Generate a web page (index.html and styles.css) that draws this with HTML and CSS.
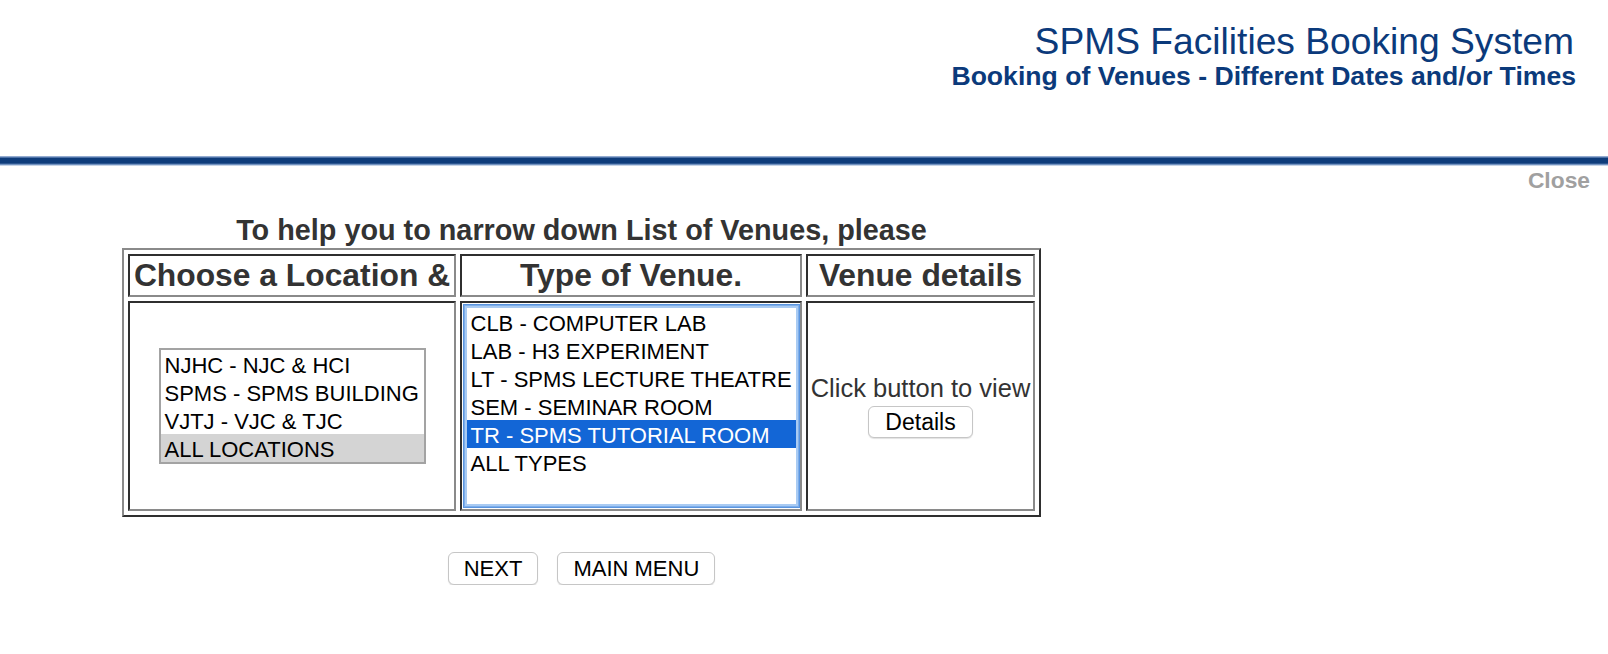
FILE: index.html
```html
<!DOCTYPE html>
<html lang="en">
<head>
<meta charset="utf-8">
<title>SPMS Facilities Booking System</title>
<link rel="stylesheet" href="styles.css">
</head>
<body>
<header class="masthead">
  <div class="title">SPMS Facilities Booking System</div>
  <div class="subtitle">Booking of Venues - Different Dates and/or Times</div>
</header>
<div class="rule"></div>
<div class="close-row"><a class="close">Close</a></div>
<main class="content">
  <div class="prompt">To help you to narrow down List of Venues, please</div>
  <div class="picker">
    <div class="cell head">Choose a Location &amp;</div>
    <div class="cell head">Type of Venue.</div>
    <div class="cell head">Venue details</div>
    <div class="cell body">
      <div class="listbox loc" role="listbox">
        <div class="opt">NJHC - NJC &amp; HCI</div>
        <div class="opt">SPMS - SPMS BUILDING</div>
        <div class="opt">VJTJ - VJC &amp; TJC</div>
        <div class="opt sel-inactive">ALL LOCATIONS</div>
      </div>
    </div>
    <div class="cell body">
      <div class="listbox type" role="listbox">
        <div class="opt">CLB - COMPUTER LAB</div>
        <div class="opt">LAB - H3 EXPERIMENT</div>
        <div class="opt">LT - SPMS LECTURE THEATRE</div>
        <div class="opt">SEM - SEMINAR ROOM</div>
        <div class="opt sel-active">TR - SPMS TUTORIAL ROOM</div>
        <div class="opt">ALL TYPES</div>
      </div>
    </div>
    <div class="cell body details">
      <div class="hint">Click button to view</div>
      <button class="btn btn-details">Details</button>
    </div>
  </div>
  <div class="actions">
    <button class="btn">NEXT</button>
    <button class="btn">MAIN MENU</button>
  </div>
</main>
</body>
</html>
```
FILE: styles.css
```css
html, body {
  margin: 0;
  padding: 0;
  background: #ffffff;
}
body {
  font-family: "Liberation Sans", Arial, Helvetica, sans-serif;
  color: #333333;
}
.masthead {
  height: 156px;
  box-sizing: border-box;
  padding: 20px 34px 0 0;
  text-align: right;
  color: #0b3a7b;
}
.title {
  font-size: 37.2px;
  line-height: 42px;
  font-weight: normal;
}
.subtitle {
  font-size: 26.6px;
  line-height: 28px;
  font-weight: bold;
  margin-right: -2px;
}
.rule {
  height: 10px;
  background: linear-gradient(to bottom,
    #93abd0 0, #93abd0 1px,
    #4f73a8 1px, #4f73a8 2px,
    #0e3c7b 2px, #0e3c7b 7px,
    #2c5690 7px, #2c5690 8px,
    #7192c0 8px, #7192c0 9px,
    #c6d3e6 9px, #c6d3e6 10px);
}
.close-row {
  height: 26px;
  line-height: 28px;
  text-align: right;
  padding-right: 18px;
}
.close {
  font-size: 22.8px;
  font-weight: bold;
  color: #a0a0a0;
  cursor: pointer;
}
.content {
  width: 919px;
  margin: 22px 0 0 122px;
}
.prompt {
  font-size: 28.8px;
  line-height: 32px;
  font-weight: bold;
  text-align: center;
  color: #333333;
  margin-bottom: 2px;
}
.picker {
  display: grid;
  grid-template-columns: 328px 342px 229px;
  grid-template-rows: 43px 210px;
  gap: 4px;
  padding: 4px;
  border: 2px solid;
  border-color: #8a8a8a #2f2f2f #2f2f2f #8a8a8a;
}
.cell {
  box-sizing: border-box;
  border: 2px solid;
  border-color: #2f2f2f #8a8a8a #8a8a8a #2f2f2f;
  display: flex;
  align-items: center;
  justify-content: center;
}
.head {
  font-size: 31.8px;
  font-weight: bold;
  color: #333333;
  white-space: nowrap;
}
.listbox {
  background: #ffffff;
  box-sizing: border-box;
  color: #000000;
  font-size: 22px;
}
.loc {
  width: 267px;
  border: 2px solid #a3a3a3;
}
.type {
  width: 337px;
  height: 204px;
  border: 1px solid #5a95df;
  padding: 3px;
  box-shadow: inset 0 0 0 1px #7eaeea, inset 0 0 0 3px #a9cbf3;
}
.opt {
  box-sizing: border-box;
  height: 28px;
  line-height: 28px;
  padding: 2px 0 0 4px;
  white-space: nowrap;
  overflow: hidden;
}
.sel-inactive {
  background: #d4d4d4;
}
.sel-active {
  background: #1366d6;
  color: #ffffff;
}
.details {
  flex-direction: column;
}
.hint {
  font-size: 25.5px;
  line-height: 29px;
  color: #333333;
  white-space: nowrap;
}
.btn {
  font-family: "Liberation Sans", Arial, Helvetica, sans-serif;
  font-size: 22px;
  color: #000000;
  background: #ffffff;
  border: 1px solid #c6c6c6;
  border-radius: 6px;
  box-shadow: 0 1px 1px rgba(0, 0, 0, 0.12);
  padding: 0 15px;
  height: 33px;
  margin: 0;
  cursor: pointer;
}
.btn-details {
  font-size: 23px;
  height: 32px;
  margin-top: 3px;
  padding: 0 16px;
}
.actions {
  display: flex;
  justify-content: center;
  gap: 19px;
  margin-top: 35px;
}
```
